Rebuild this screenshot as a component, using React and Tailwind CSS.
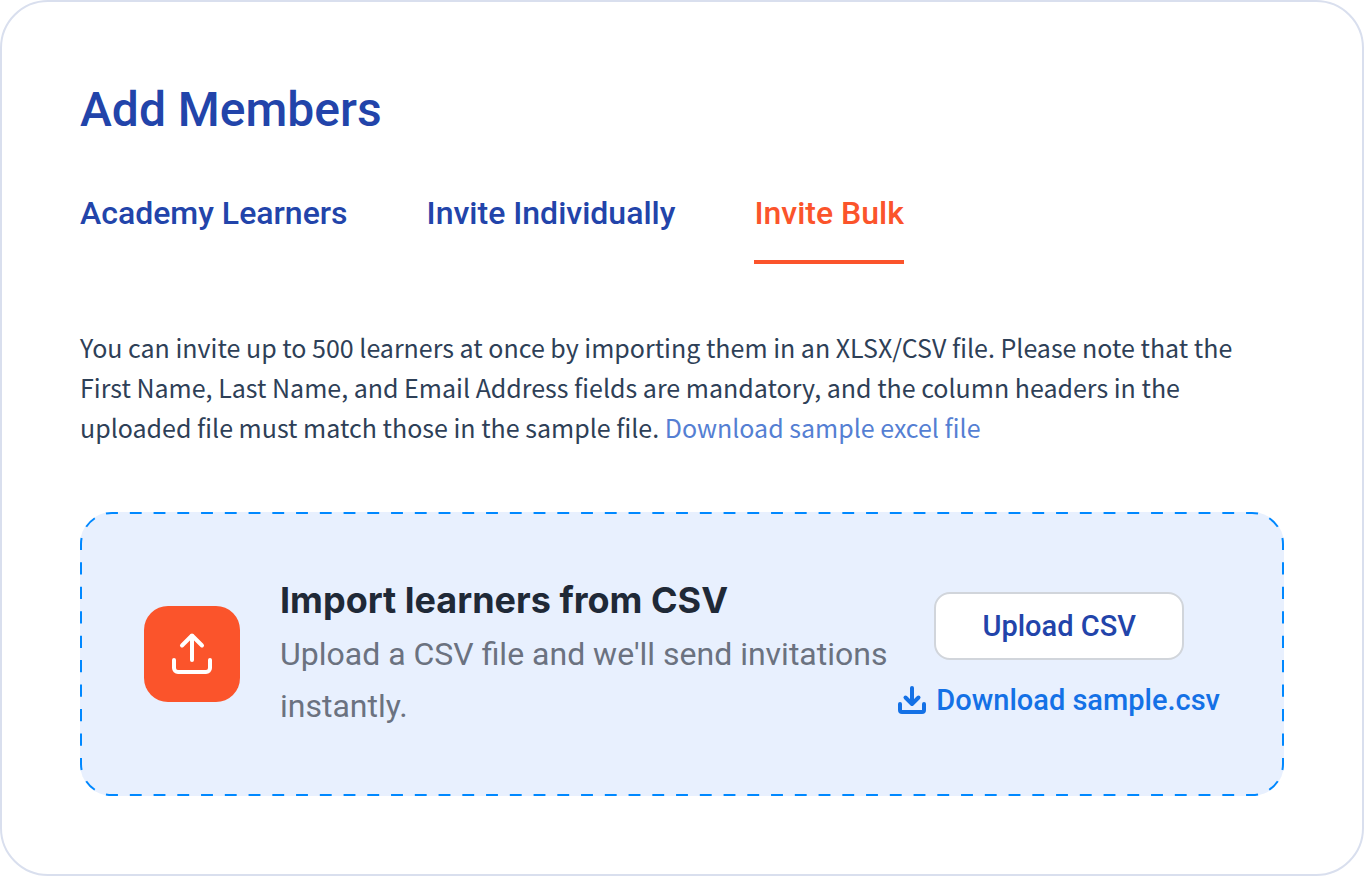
import React from 'react';

const tabs = [
  { id: 'academy', label: 'Academy Learners' },
  { id: 'individual', label: 'Invite Individually' },
  { id: 'bulk', label: 'Invite Bulk' },
];

// Dash and gap are 12 units each; pathLength scales them to whole dashes per side
function DashedFrame() {
  const dash = { fill: 'none', stroke: '#0088ff', strokeWidth: 2, strokeDasharray: '12 12', strokeDashoffset: 6 };
  const arc = <path d="M1 32A31 31 0 0 1 32 1" pathLength="48" {...dash} />;

  return (
    <div className="pointer-events-none absolute inset-0" aria-hidden="true">
      <svg className="absolute top-0 left-8 h-0.5 w-[calc(100%-64px)]">
        <line x1="0" y1="1" x2="100%" y2="1" pathLength="1152" {...dash} />
      </svg>
      <svg className="absolute bottom-0 left-8 h-0.5 w-[calc(100%-64px)]">
        <line x1="0" y1="1" x2="100%" y2="1" pathLength="1152" {...dash} />
      </svg>
      <svg className="absolute top-8 left-0 h-[calc(100%-64px)] w-0.5">
        <line x1="1" y1="0" x2="1" y2="100%" pathLength="216" {...dash} />
      </svg>
      <svg className="absolute top-8 right-0 h-[calc(100%-64px)] w-0.5">
        <line x1="1" y1="0" x2="1" y2="100%" pathLength="216" {...dash} />
      </svg>
      <svg className="absolute top-0 left-0 size-8">{arc}</svg>
      <svg className="absolute top-0 right-0 size-8 rotate-90">{arc}</svg>
      <svg className="absolute right-0 bottom-0 size-8 rotate-180">{arc}</svg>
      <svg className="absolute bottom-0 left-0 size-8 -rotate-90">{arc}</svg>
    </div>
  );
}

function UploadIcon() {
  return (
    <svg className="size-12" viewBox="0 0 48 48" fill="none" stroke="currentColor" strokeWidth="4" strokeLinecap="round" strokeLinejoin="round" aria-hidden="true">
      <path d="M24 30V6" />
      <path d="M14 15.5L24 5.5L34 15.5" />
      <path d="M6 30v8a4 4 0 0 0 4 4h28a4 4 0 0 0 4-4v-8" />
    </svg>
  );
}

function DownloadIcon() {
  return (
    <svg className="size-7" viewBox="0 0 28 28" fill="none" stroke="currentColor" strokeWidth="4" strokeLinecap="round" strokeLinejoin="round" aria-hidden="true">
      <path d="M14 2v15" />
      <path d="M7.5 11.5l6.5 6.5l6.5-6.5" />
      <path d="M2 18v6a2 2 0 0 0 2 2h20a2 2 0 0 0 2-2v-6" />
    </svg>
  );
}

function App() {
  return (
    <main className="min-h-screen rounded-[48px] border-2 border-[#d9dfee] bg-white px-[78px] pt-20 pb-[78px] font-['Roboto',sans-serif]">
      <h1 className="text-5xl leading-[56px] font-medium text-[#2244aa]">Add Members</h1>

      {/* Tabs */}
      <div role="tablist" className="mt-10 flex gap-[79px]">
        {tabs.map((tab) => (
          <button
            key={tab.id}
            type="button"
            role="tab"
            aria-selected={tab.id === 'bulk'}
            className="cursor-pointer border-b-4 border-transparent pt-[15px] pb-[27px] text-[32px] leading-10 font-medium text-[#2244aa] aria-selected:border-[#fb542b] aria-selected:text-[#fb542b]"
          >
            {tab.label}
          </button>
        ))}
      </div>

      <p className="mt-[63px] font-['Noto_Sans_CJK_SC',sans-serif] text-[25px] leading-10 text-[#2e4057]">
        You can invite up to 500 learners at once by importing them in an XLSX/CSV file. Please note that the
        {' '}<br className="hidden xl:inline" />
        First Name, Last Name, and Email Address fields are mandatory, and the column headers in the
        {' '}<br className="hidden xl:inline" />
        uploaded file must match those in the sample file.{' '}
        <a href="#sample-excel" className="text-[#557fd3]">Download sample excel file</a>
      </p>

      {/* CSV import */}
      <section className="relative mt-[65px] flex items-center gap-10 rounded-[32px] bg-[#e8f0fe] p-16">
        <div className="flex size-24 shrink-0 items-center justify-center rounded-3xl bg-[#fb542b] text-white">
          <UploadIcon />
        </div>
        <div className="min-w-0 flex-1">
          <h2 className="mb-1 font-['Inter',sans-serif] text-4xl leading-12 font-bold text-[#1f2937]">
            Import learners from CSV
          </h2>
          <p className="text-[32px] leading-[52px] text-[#6b7280]">
            Upload a CSV file and we'll send invitations instantly.
          </p>
        </div>
        <div className="-ml-8 flex shrink-0 flex-col items-center gap-5 pt-1">
          <button type="button" className="cursor-pointer rounded-2xl border-2 border-[#d1d5db] bg-white px-[46px] py-3 text-[29px] leading-10 font-medium text-[#2244aa]">
            Upload CSV
          </button>
          <a href="#sample-csv" className="flex items-center gap-2.5 text-[29px] leading-10 font-medium text-[#1471e6]">
            <DownloadIcon />
            Download sample.csv
          </a>
        </div>
        <DashedFrame />
      </section>
    </main>
  );
}

export default App;
